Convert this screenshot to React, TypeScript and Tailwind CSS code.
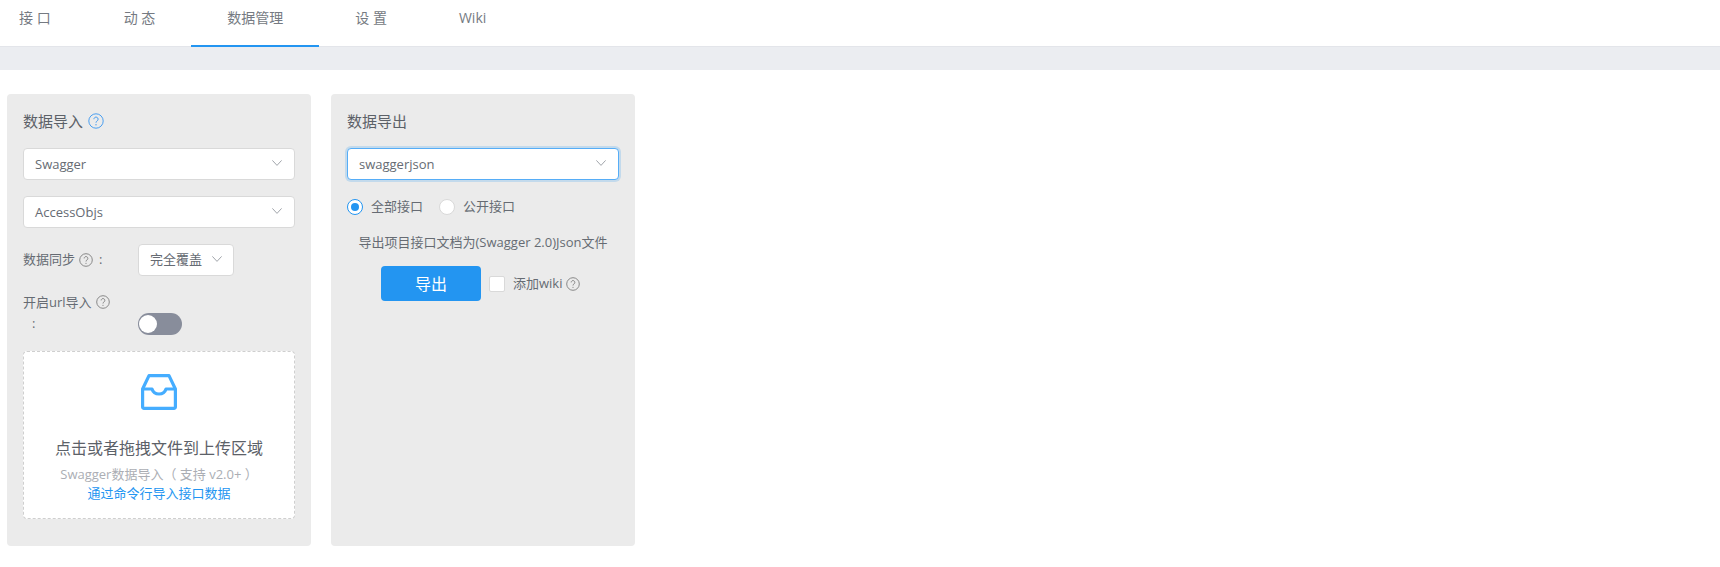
const FONT = "[font-family:'Open_Sans','Noto_Sans_CJK_SC',sans-serif]";

const tabs = [
  { label: "接 口", cls: "pl-[19px] pr-[37px]" },
  { label: "动 态", cls: "px-[36px]" },
  { label: "数据管理", cls: "px-[36px]", active: true },
  { label: "设 置", cls: "px-[36px]" },
  { label: "Wiki", cls: "px-[36px]" },
];

function Help({ className = "text-[#7a7a7a]", size = 14 }: { className?: string; size?: number }) {
  return (
    <svg viewBox="0 0 16 16" width={size} height={size} fill="none" className={`shrink-0 ${className}`}>
      <circle cx="8" cy="8" r="7.2" stroke="currentColor" strokeWidth="1" />
      <path d="M5.9 6.2a2.1 2.1 0 1 1 3.3 1.7c-.8.5-1.2.9-1.2 1.8" stroke="currentColor" strokeWidth="1" />
      <circle cx="8" cy="11.7" r=".7" fill="currentColor" />
    </svg>
  );
}

function Chevron() {
  return (
    <svg viewBox="0 0 10 6" width="10" height="6" fill="none" className="mb-[2px] shrink-0 text-[#a0a4aa]">
      <path d="M.4.4 5 5.400 9.600.4" stroke="currentColor" strokeWidth="1" />
    </svg>
  );
}

function Select({ value, focused, className = "" }: { value: string; focused?: boolean; className?: string }) {
  return (
    <div
      className={`flex h-8 items-center justify-between rounded-[4px] border bg-white pl-[11px] pr-[12px] text-[13px] text-[#666b73] ${
        focused ? "border-[#56adf7] shadow-[0_0_0_2px_rgba(35,149,240,0.2)]" : "border-[#d9d9d9]"
      } ${className}`}
    >
      <span className="pt-[1px]">{value}</span>
      <Chevron />
    </div>
  );
}

function Radio({ label, checked }: { label: string; checked?: boolean }) {
  return (
    <div className="flex items-center gap-[8px]">
      <span
        className={`flex h-4 w-4 items-center justify-center rounded-full border bg-white ${
          checked ? "border-[#2395f1]" : "border-[#d9d9d9]"
        }`}
      >
        {checked && <span className="h-2 w-2 rounded-full bg-[#2395f1]" />}
      </span>
      <span>{label}</span>
    </div>
  );
}

function InboxIcon() {
  return (
    <svg viewBox="0 0 36 36" width="36" height="36" fill="none" stroke="#45adff" strokeWidth="3.2" strokeLinejoin="round">
      <path d="M8 1.600h20L34.400 15v18a1.400 1.400 0 0 1-1.400 1.400H3A1.400 1.400 0 0 1 1.600 33V15z" />
      <path d="M1.600 15h9.400c1 3.200 3.600 5 7 5s6-1.800 7-5h9.400" />
    </svg>
  );
}

export default function App() {
  return (
    <div className={`min-h-[567px] bg-white ${FONT}`}>
      <nav className="flex h-[46px] bg-white text-[14px] text-[#757a82]">
        {tabs.map((tab) => (
          <div
            key={tab.label}
            className={`flex h-[47px] items-start pt-[7px] ${tab.cls} ${tab.active ? "border-b-2 border-[#2395f1]" : ""}`}
          >
            {tab.label}
          </div>
        ))}
      </nav>
      <div className="h-[24px] border-t border-[#e3e5ea] bg-[#ebedf1]" />

      <div className="flex items-start gap-[20px] pl-[7px] pt-[24px] text-[13px] text-[#666b73]">
        <section className="h-[452px] w-[304px] rounded-[4px] bg-[#ebebeb] px-4 pt-[17px]">
          <div className="flex h-[20px] items-center gap-[5px] text-[15px] text-[#5c6168]">
            数据导入
            <Help className="text-[#4b9ff0]" size={16} />
          </div>
          <Select value="Swagger" className="mt-[17px]" />
          <Select value="AccessObjs" className="mt-[16px]" />

          <div className="mt-[16px] flex items-center">
            <div className="flex w-[115px] items-center gap-[4px]">
              数据同步
              <Help />
              <span className="ml-[2px]">:</span>
            </div>
            <div className="flex h-8 w-[96px] items-center gap-[10px] rounded-[4px] border border-[#d9d9d9] bg-white pl-[11px]">
              完全覆盖
              <Chevron />
            </div>
          </div>

          <div className="mt-[16px] flex items-start">
            <div className="w-[115px] leading-[20px]">
              <div className="flex items-center gap-[4px]">
                开启url导入
                <Help />
              </div>
              <div className="mt-[1px] pl-[9px]">:</div>
            </div>
            <div className="mt-[21px] flex h-[22px] w-[44px] items-center rounded-full bg-[#888d9b] pl-[1px]">
              <span className="h-[18px] w-[18px] rounded-full bg-white" />
            </div>
          </div>

          <div className="mt-[16px] flex h-[168px] w-[272px] flex-col items-center rounded-[4px] border border-dashed border-[#cfcfcf] bg-white pt-[22px] text-center">
            <InboxIcon />
            <div className="mt-[26px] text-[16px] leading-[24px] text-[#5c6168]">点击或者拖拽文件到上传区域</div>
            <div className="mt-[5px] leading-[18px] text-[#abaeb4]">Swagger数据导入（ 支持 v2.0+ ）</div>
            <div className="mt-[1px] leading-[18px] text-[#2395f1]">通过命令行导入接口数据</div>
          </div>
        </section>

        <section className="h-[452px] w-[304px] rounded-[4px] bg-[#ebebeb] px-4 pt-[17px]">
          <div className="flex h-[20px] items-center text-[15px] text-[#5c6168]">数据导出</div>
          <Select value="swaggerjson" focused className="mt-[17px]" />
          <div className="mt-[17px] flex h-[20px] items-center gap-[16px]">
            <Radio label="全部接口" checked />
            <Radio label="公开接口" />
          </div>
          <div className="mt-[15px] h-[20px] text-center leading-[20px]">导出项目接口文档为(Swagger 2.0)Json文件</div>
          <div className="mt-[14px] flex items-center pl-[34px]">
            <div className="flex h-[35px] w-[100px] items-center justify-center rounded-[4px] bg-[#2395f1] text-[16px] text-white">
              导出
            </div>
            <span className="ml-[8px] h-4 w-4 rounded-[2px] border border-[#d9d9d9] bg-white" />
            <span className="ml-[8px]">添加wiki</span>
            <Help className="ml-[4px] text-[#7a7a7a]" />
          </div>
        </section>
      </div>
    </div>
  );
}
